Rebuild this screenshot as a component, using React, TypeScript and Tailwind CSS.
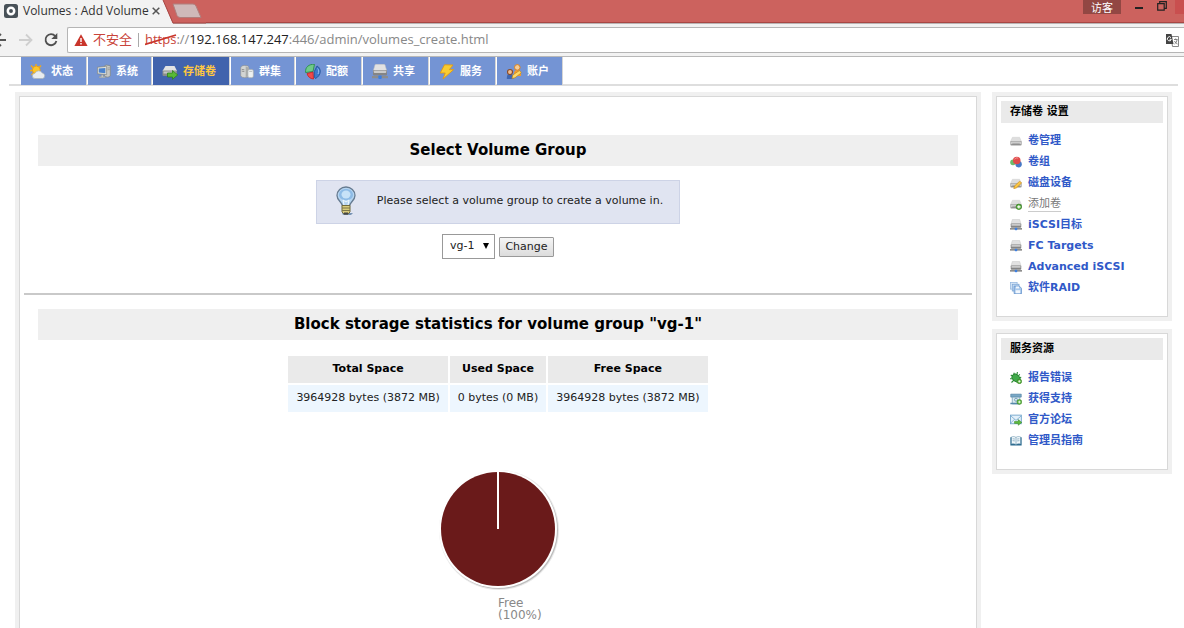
import type { ReactNode } from "react";

type IconProps = { kind: string; size: string };

function Icon({ kind, size }: IconProps) {
  return (
    <svg viewBox="0 0 16 16" className={size} aria-hidden="true">
      {glyphs[kind]}
    </svg>
  );
}

const drive = (
  <>
    <path d="M3.200 3h9.600L15.500 9H.5z" fill="#dedede" stroke="#c6c6c6" strokeWidth="0.500" />
    <rect x="0.500" y="8" width="15" height="6" rx="1.200" fill="#9a9a9a" />
    <rect x="1.300" y="8.500" width="13.400" height="3.500" rx="0.800" fill="#cdcdcd" />
    <path d="M3 12h10" stroke="#7d7d7d" />
  </>
);

const networkDrive = (
  <>
    <path d="M3 .8Q3.200.3 4 .3h8q.8 0 1 .5L14.800 7H1.200z" fill="#e2e2e2" stroke="#bdbdbd" strokeWidth="0.500" />
    <rect x="1" y="6" width="14" height="5.500" rx="1.200" fill="#858585" />
    <rect x="1.800" y="6.500" width="12.400" height="2.500" rx="0.800" fill="#cacaca" />
    <rect x="0" y="12" width="16" height="2.200" fill="#8d8d8d" />
    <rect x="6.300" y="11.500" width="3.400" height="3.500" rx="1" fill="#3d7fe0" />
  </>
);

const glyphs: Record<string, ReactNode> = {
  weather: (
    <>
      <path d="M6 0v3M1 1.500l2 2.200M11 1.500l-2 2.200M0 6.500h3M1.500 11l2-2" stroke="#f0a91c" strokeWidth="1.400" />
      <circle cx="6.300" cy="6" r="3.900" fill="#fbc62b" stroke="#e99a12" strokeWidth="0.800" />
      <path d="M5 14.500a2.600 2.600 0 0 1 0-5.200 4 4 0 0 1 7.200-.4 2.900 2.900 0 0 1 .6 5.600z" fill="#e8ecef" stroke="#a9b1b8" strokeWidth="0.700" />
    </>
  ),
  computer: (
    <>
      <path d="M8.500 1l2-1 4.700.8V12.500l-2.700 1.500-4-1z" fill="#c7c9c6" stroke="#80847f" strokeWidth="0.800" />
      <path d="M12 3.500l2.500-.3M12 5.500l2.500-.3" stroke="#8c8f8b" strokeWidth="0.800" />
      <path d="M0.500 2.500l10.500-1v9.500l-10.500-1z" fill="#dfe1dc" stroke="#787c78" strokeWidth="0.700" />
      <path d="M2 4l7.500-.7v6L2 8.700z" fill="#4b83cf" />
      <path d="M5 11h2v2h2.500v1.500h-7V13H5z" fill="#c9cbc7" stroke="#808480" strokeWidth="0.400" />
    </>
  ),
  volume: (
    <>
      <path d="M3.500 2h9L15 7H.5z" fill="#e3e3e3" />
      <rect x="0.500" y="6.500" width="14.500" height="5.500" rx="1" fill="#8a8d8a" />
      <rect x="1.500" y="7.500" width="12" height="2" fill="#c5c7c5" />
      <path d="M5.500 9h5V6.500l5.200 4.400-5.200 4.400V13h-5z" fill="#59b935" stroke="#2d8219" strokeWidth="0.800" />
    </>
  ),
  cluster: (
    <>
      <path d="M0.800 3.500q0-3 4.700-3T10 3v9.500q-1 2-4.500 2t-4.700-2z" fill="#d3d5d3" stroke="#8d8f8d" strokeWidth="0.700" />
      <path d="M6.500 1.500v12.500l3.500-1.500V3z" fill="#a9aba9" />
      <path d="M2 5l3 .5M2 7l3 .5" stroke="#777" strokeWidth="0.800" />
      <rect x="9" y="5" width="6.300" height="9.500" rx="1.800" fill="#edf0f0" stroke="#a5aaad" strokeWidth="0.800" />
      <path d="M10.500 7.300h3.500" stroke="#a5a9ab" strokeWidth="0.800" />
    </>
  ),
  quota: (
    <>
      <path d="M8 7.500L.6 8.500C0 3 4 0 9.500.3z" fill="#6fc98a" stroke="#298e4b" strokeWidth="0.900" />
      <path d="M8 8l.5 7A7.500 7.500 0 0 1 2 9.500z" fill="#f04a4a" stroke="#c92626" strokeWidth="0.900" />
      <path d="M9.300 7.500L12 2c4.500 2 4.500 9.500-1.500 12.500L9.300 13z" fill="#3d79cb" stroke="#24549b" strokeWidth="0.900" />
      <path d="M12.500 4.500c1.500 1.200 1.700 3.500.5 5.500" stroke="#9cc4f3" fill="none" />
    </>
  ),
  share: networkDrive,
  bolt: (
    <path d="M5.500.8L14 1l-3.600 4.600h4.300L4 15l2.200-6H1.200z" fill="#f9cc32" stroke="#e09a15" strokeWidth="0.900" />
  ),
  account: (
    <>
      <path d="M8 12c-.5-5 1-6 3.500-6s4 2 3.500 6z" fill="#f39a2c" />
      <circle cx="11.300" cy="3.400" r="2.800" fill="#f6cd97" stroke="#d8801f" strokeWidth="1" />
      <path d="M0.800 15c0-4 1-5.500 3.200-5.500S7.500 11 7.500 15z" fill="#3f66b0" />
      <circle cx="4" cy="8" r="2.500" fill="#f0bd8e" stroke="#8b4b28" strokeWidth="1.100" />
      <path d="M6 14.500l.8-3.500 6.700-4.500 1.800 2.300-6.300 5z" fill="#fbd969" stroke="#bd851e" strokeWidth="0.700" />
    </>
  ),
  drive,
  group: (
    <>
      <circle cx="4" cy="8.500" r="3.700" fill="#6dbb6b" />
      <circle cx="11.500" cy="11" r="4.200" fill="#4679c6" />
      <circle cx="9" cy="6" r="5" fill="#e04b4b" />
      <path d="M6.300 4.500a3 3 0 0 1 4.500-1.500" stroke="#f7a0a0" strokeWidth="1.200" fill="none" />
    </>
  ),
  editDrive: (
    <>
      {drive}
      <path d="M5 15.500l1-3.500L13 5.500l2.500 2.500-7 6.500z" fill="#fac643" stroke="#c88718" strokeWidth="0.800" />
    </>
  ),
  addDrive: (
    <>
      {drive}
      <circle cx="11.800" cy="11.800" r="3.700" fill="#56a83c" stroke="#34801f" strokeWidth="0.800" />
      <path d="M11.800 9.600v4.400M9.600 11.800h4.400" stroke="#fff" strokeWidth="1.400" />
    </>
  ),
  raid: (
    <>
      <rect x="0.500" y="0.500" width="9" height="9" fill="#dbe8f7" stroke="#94b7df" />
      <rect x="3" y="3" width="9" height="9" fill="#c3daf3" stroke="#7ba4d4" />
      <path d="M5.500 5.500h7l3 3v7h-10z" fill="#a8c8ec" stroke="#5c8dc8" />
      <rect x="8" y="6" width="4" height="2.500" fill="#f2f7fd" />
      <rect x="7.500" y="11" width="6" height="4" fill="#f2f7fd" />
    </>
  ),
  bug: (
    <>
      <path d="M5 1l1.500 4M10 0l-1 4M1 4l5 3M0 9h6M2 14l4-4M13 3l-3 4M15 7l-5 1" stroke="#2b8d35" strokeWidth="1.500" />
      <ellipse cx="8" cy="8" rx="6" ry="4.600" transform="rotate(42 8 8)" fill="#40aa49" stroke="#207b2b" />
      <circle cx="12.500" cy="12.500" r="3" fill="#5fb942" stroke="#3c8428" />
      <path d="M12.500 11v3M11 12.500h3" stroke="#fff" />
    </>
  ),
  support: (
    <>
      <path d="M1 1.500h14v4H1z" fill="#78a8c6" stroke="#4b7c9e" strokeWidth="0.800" />
      <path d="M3 5.500h10v9H3z" fill="#dceaf1" stroke="#6f9bb6" />
      <path d="M0.500 14h11" stroke="#5589aa" strokeWidth="2" />
      <circle cx="8" cy="9" r="2" fill="none" stroke="#5d90ae" />
      <circle cx="12.500" cy="12" r="3.200" fill="#5fb942" stroke="#3c8428" strokeWidth="0.800" />
      <path d="M12.500 10.300v3.400M10.800 12h3.400" stroke="#fff" />
    </>
  ),
  mail: (
    <>
      <rect x="0.600" y="1.500" width="14.500" height="11.500" fill="#e3f0fa" stroke="#72a5cb" strokeWidth="1.200" />
      <path d="M1 2.500l7 6 7-6M1 12l5-5M15 12l-5-5" stroke="#72a5cb" fill="none" />
      <path d="M6 10h5V7.500l4.700 3.700L11 15v-2.500H6z" fill="#5fbc3d" stroke="#38861f" strokeWidth="0.700" />
    </>
  ),
  book: (
    <>
      <path d="M0.500 3h15v11h-15z" fill="#27678c" />
      <path d="M2 2.500c2.500-.8 4.500-.5 6 .7 1.500-1.200 3.500-1.500 6-.7V12c-2.500-.6-4.500-.4-6 .8-1.500-1.200-3.500-1.400-6-.8z" fill="#f2f8fb" stroke="#6392ac" strokeWidth="0.700" />
      <path d="M8 3.500v9M3.500 5l3 .4M3.500 7.500l3 .4M9.500 5.400l3-.4M9.500 7.900l3-.4" stroke="#6a97b0" strokeWidth="0.900" />
    </>
  ),
};

const tabs = [
  { label: "状态", icon: "weather", size: "size-4", active: false },
  { label: "系统", icon: "computer", size: "h-4 w-[14px]", active: false },
  { label: "存储卷", icon: "volume", size: "size-4", active: true },
  { label: "群集", icon: "cluster", size: "h-4 w-[14px]", active: false },
  { label: "配额", icon: "quota", size: "size-4", active: false },
  { label: "共享", icon: "share", size: "size-4", active: false },
  { label: "服务", icon: "bolt", size: "size-4", active: false },
  { label: "账户", icon: "account", size: "size-4", active: false },
];

const settings = [
  { label: "卷管理", icon: "drive" },
  { label: "卷组", icon: "group" },
  { label: "磁盘设备", icon: "editDrive" },
  { label: "添加卷", icon: "addDrive", current: true },
  { label: "iSCSI目标", icon: "share" },
  { label: "FC Targets", icon: "share" },
  { label: "Advanced iSCSI", icon: "share" },
  { label: "软件RAID", icon: "raid" },
];

const resources = [
  { label: "报告错误", icon: "bug" },
  { label: "获得支持", icon: "support" },
  { label: "官方论坛", icon: "mail" },
  { label: "管理员指南", icon: "book" },
];

function TitleBar() {
  return (
    <div className="flex h-6 items-start border-b border-[#b9b4b4] bg-[#cc625e]">
      <div className="flex h-6 items-center bg-[#f2f2f2] pb-[2px] pl-1">
        <svg viewBox="0 0 14 14" className="size-[14px]" aria-hidden="true">
          <rect width="14" height="14" rx="2.500" fill="#485158" />
          <circle cx="7" cy="7" r="3.200" fill="none" stroke="#fff" strokeWidth="2.500" />
        </svg>
        <span className="ml-[5px] text-xs whitespace-nowrap text-[#333]">Volumes : Add Volume</span>
        <button type="button" aria-label="Close tab" className="ml-[3px]">
          <svg viewBox="0 0 8 8" className="size-2" aria-hidden="true">
            <path d="M.7.7l6.600 6.600M7.300.7L.7 7.300" stroke="#555" strokeWidth="1.500" />
          </svg>
        </button>
      </div>
      <svg viewBox="0 0 46 24" className="h-6 w-[46px]" aria-hidden="true">
        <path d="M0 0h3l10 24H0z" fill="#f2f2f2" />
        <path d="M3 0l10 23h33" fill="none" stroke="#a84744" />
        <path d="M13 4h20q2 0 3 2l5 11.500H20q-2 0-3-2z" fill="#cfb9b9" stroke="#b07e7c" />
      </svg>
      <div className="h-[23px] flex-1 border-b border-[#a84744]" />
      <div className="flex h-[23px] items-start border-b border-[#a84744]">
        <button type="button" className="h-[14px] w-[38px] bg-[#924743] text-[11px] leading-[11px] text-white">
          访客
        </button>
        <button type="button" aria-label="Minimize" className="ml-[14px] flex h-[14px] items-center">
          <svg viewBox="0 0 8 14" className="h-[14px] w-2" aria-hidden="true">
            <path d="M0 8h8" stroke="#222" strokeWidth="2" />
          </svg>
        </button>
        <button type="button" aria-label="Restore" className="ml-[14px] pt-[1px]">
          <svg viewBox="0 0 10 10" className="size-[10px]" aria-hidden="true">
            <path d="M.7 2.700h6.500v6.500H.7zM2.700 2.500V.6h6.600v6.700H7.500" fill="none" stroke="#222" strokeWidth="1.200" />
          </svg>
        </button>
        <div className="ml-2 h-[14px] w-[9px] bg-[#c94f4f]" />
      </div>
    </div>
  );
}

function AddressBar() {
  return (
    <div className="flex h-[33px] items-center border-b border-[#b8b8b8] bg-[#f2f2f2]">
      <button type="button" aria-label="Back">
        <svg viewBox="0 0 7 14" className="h-[14px] w-[7px]" aria-hidden="true">
          <path d="M0 7h6M1 1L-5 7l6 6" fill="none" stroke="#555" strokeWidth="1.800" />
        </svg>
      </button>
      <button type="button" aria-label="Forward" className="ml-3">
        <svg viewBox="0 0 14 14" className="size-[14px]" aria-hidden="true">
          <path d="M0 7h12M7 1.500L12.500 7 7 12.500" fill="none" stroke="#cfcfcf" strokeWidth="1.800" />
        </svg>
      </button>
      <button type="button" aria-label="Reload" className="ml-[11px]">
        <svg viewBox="0 0 14 14" className="size-[14px]" aria-hidden="true">
          <path d="M11.300 3.200A5.500 5.500 0 1 0 12.400 8" fill="none" stroke="#505050" strokeWidth="1.800" />
          <path d="M13.300 0v6H7.300z" fill="#505050" />
        </svg>
      </button>
      <div className="ml-[9px] flex h-[26px] flex-1 items-center rounded-l-xs border-y border-l border-[#b5b5b5] bg-white pr-[5px] pl-[6px] text-[13px]">
        <svg viewBox="0 0 14 12" className="h-3 w-[14px]" aria-hidden="true">
          <path d="M7 .3L13.600 12H.4z" fill="#c9352b" />
          <path d="M7 4v4M7 9v1.500" stroke="#fff" strokeWidth="1.400" />
        </svg>
        <span className="ml-[5px] text-[#c9443a]">不安全</span>
        <span className="mx-[6px] h-[14px] w-px bg-[#aaa]" />
        <span className="whitespace-nowrap text-[#888]">
          <span className="relative text-[#c9443a]">
            https
            <svg viewBox="0 0 32 12" className="absolute top-1 left-0 h-3 w-8" aria-hidden="true">
              <path d="M0 10.500L31 1" stroke="#c9352b" strokeWidth="1.700" />
            </svg>
          </span>
          ://<span className="text-[#222]">192.168.147.247</span>:446/admin/volumes_create.html
        </span>
        <button type="button" aria-label="Translate" className="ml-auto">
          <svg viewBox="0 0 13 13" className="size-[13px]" aria-hidden="true">
            <path d="M5 2.500h7.500v10H6.500z" fill="#fff" stroke="#888" />
            <path d="M8 5.500h3.500M9.700 4.500v1M8.500 10c1.500-1 2.500-2.500 2.500-4.500M8.500 7c.8 1.500 1.500 2.500 3 3" stroke="#777" fill="none" strokeWidth="0.900" />
            <path d="M0 0h5.500l2 10H0z" fill="#444" />
            <path d="M5 3.700A2 2 0 1 0 5.300 5.300H3.600" stroke="#fff" fill="none" />
          </svg>
        </button>
      </div>
    </div>
  );
}

function SidePanel({ title, items }: { title: string; items: { label: string; icon: string; current?: boolean }[] }) {
  return (
    <section className="bg-[#f0f0f0] p-1">
      <div className="border border-[#d8d8d8] bg-white p-1 pb-[18px]">
        <h2 className="h-[22px] bg-[#eaeaea] pl-[9px] text-[11px] leading-[22px] font-bold text-black">{title}</h2>
        <ul className="mt-[7px]">
          {items.map((item) => (
            <li key={item.label} className="flex h-[21px] items-center gap-[6px] pl-[9px]">
              <Icon kind={item.icon} size="size-3" />
              {item.current ? (
                <a href="#" className="border-b border-[#ccc] text-[11px] leading-[15px] text-[#777]">
                  {item.label}
                </a>
              ) : (
                <a href="#" className="text-[11px] leading-4 font-bold whitespace-nowrap text-[#3059c8]">
                  {item.label}
                </a>
              )}
            </li>
          ))}
        </ul>
      </div>
    </section>
  );
}

function Banner({ children }: { children: ReactNode }) {
  return <h1 className="h-[31px] bg-[#efefef] text-center text-[15px] leading-[30px] font-bold text-black">{children}</h1>;
}

function Bulb() {
  return (
    <svg viewBox="0 0 22 30" className="h-[30px] w-[22px]" aria-hidden="true">
      <path d="M7 27h11l-2 2H8z" fill="#7894b4" />
      <path d="M7.500 20C7 16 2 14.500 2 9.500a9 8.500 0 0 1 18 0c0 5-5 6.500-5.500 10.500z" fill="#b6d5f1" stroke="#667b91" strokeWidth="1.300" />
      <path d="M4 9c0-8 14-8 14 0 0 3-3 5-7 5S4 12 4 9z" fill="#8ebbe6" />
      <ellipse cx="11" cy="8.500" rx="4.500" ry="4" fill="#c7e2f8" />
      <path d="M9 19l-1-5 3 2 3-2-1 5" fill="none" stroke="#eef7ff" />
      <path d="M7 19.500h8V26l-2 2H9l-2-2z" fill="#d9cc7c" stroke="#716a3d" />
      <path d="M7 22h8M7 24.500h8" stroke="#7e7747" />
      <path d="M9 27.500h4" stroke="#444" strokeWidth="2" />
    </svg>
  );
}

export default function App() {
  return (
    <div className="flex min-h-screen flex-col overflow-x-hidden bg-white font-['DejaVu_Sans','Noto_Sans_CJK_SC',sans-serif] text-[#222]">
      <header className="font-['Open_Sans','Noto_Sans_CJK_SC',sans-serif]">
        <TitleBar />
        <AddressBar />
      </header>

      <nav className="mr-[6px] ml-[9px] flex h-[29px] gap-px border-b-2 border-[#dedede] pl-3">
        {tabs.map((tab) => (
          <a
            key={tab.label}
            href="#"
            className={
              tab.active
                ? "flex h-7 items-center gap-[5px] border-r border-[#d5d5d5] bg-[#4163ad] pt-[2px] pr-[13px] pl-[9px] text-[11px] font-bold text-[#ffc840]"
                : "flex h-7 items-center gap-[5px] border-r border-[#d5d5d5] bg-[#7494d4] pt-[2px] pr-[13px] pl-[9px] text-[11px] font-bold text-white"
            }
          >
            <Icon kind={tab.icon} size={tab.size} />
            {tab.label}
          </a>
        ))}
      </nav>

      <div className="flex flex-1 gap-[11px] pt-[6px] pr-3 pl-[15px]">
        <main className="flex min-w-0 flex-1 flex-col bg-[#f0f0f0] px-1 pt-1">
          <div className="flex-1 border-x border-t border-[#d8d8d8] bg-white px-1 pt-[38px]">
            <section className="px-[14px]">
              <Banner>Select Volume Group</Banner>
              <div className="mx-auto mt-[14px] flex h-11 w-fit items-center border border-[#cdd3e6] bg-[#e0e4f1] pr-4 pb-[2px] pl-[18px] text-[11px]">
                <Bulb />
                <p className="ml-5 leading-4">Please select a volume group to create a volume in.</p>
              </div>
              <form className="mt-[10px] flex items-center justify-center gap-1 text-[11px]" onSubmit={(e) => e.preventDefault()}>
                <div className="relative">
                  <select aria-label="Volume group" className="h-[25px] w-[53px] appearance-none border border-[#999] bg-white pl-[7px] text-[11px]">
                    <option>vg-1</option>
                  </select>
                  <svg viewBox="0 0 6 6" className="pointer-events-none absolute top-[9px] right-[6px] size-[6px]" aria-hidden="true">
                    <path d="M0 0h6L3 6z" fill="#000" />
                  </svg>
                </div>
                <button type="submit" className="h-5 w-[55px] rounded-[1px] border border-[#999] bg-linear-to-b from-[#f5f5f5] to-[#dcdcdc] text-[11px] leading-4">
                  Change
                </button>
              </form>
            </section>
            <hr className="mt-[34px] border-t-2 border-[#c9c9c9]" />
            <section className="mt-[14px] px-[14px]">
              <Banner>Block storage statistics for volume group "vg-1"</Banner>
              <table className="mx-auto mt-[14px] border-separate border-spacing-[2px] text-[11px]">
                <thead>
                  <tr className="h-[27px] bg-[#eaeaea] text-black">
                    <th className="px-2">Total Space</th>
                    <th className="px-2">Used Space</th>
                    <th className="px-2">Free Space</th>
                  </tr>
                </thead>
                <tbody>
                  <tr className="h-[27px] bg-[#edf6fe]">
                    <td className="px-2">3964928 bytes (3872 MB)</td>
                    <td className="px-2">0 bytes (0 MB)</td>
                    <td className="px-2">3964928 bytes (3872 MB)</td>
                  </tr>
                </tbody>
              </table>
              <figure className="mt-[53px] flex flex-col items-center">
                <svg viewBox="0 0 124 124" className="size-[124px]" role="img" aria-label="Free space 100%">
                  <circle cx="63" cy="63" r="60" fill="#e9e9e9" />
                  <circle cx="63" cy="63" r="59" fill="#bdbdbd" />
                  <circle cx="62" cy="62" r="59" fill="#fff" />
                  <circle cx="62" cy="62" r="57" fill="#6a1a1a" />
                  <path d="M62 4v58" stroke="#fff" strokeWidth="2" />
                </svg>
                <figcaption className="mt-[6px] flex w-full text-xs leading-3 text-[#888]">
                  <span className="flex-1" />
                  <span className="flex-1">
                    Free
                    <br />
                    (100%)
                  </span>
                </figcaption>
              </figure>
            </section>
          </div>
        </main>

        <aside className="flex w-[180px] flex-none flex-col gap-2">
          <SidePanel title="存储卷 设置" items={settings} />
          <SidePanel title="服务资源" items={resources} />
        </aside>
      </div>
    </div>
  );
}
